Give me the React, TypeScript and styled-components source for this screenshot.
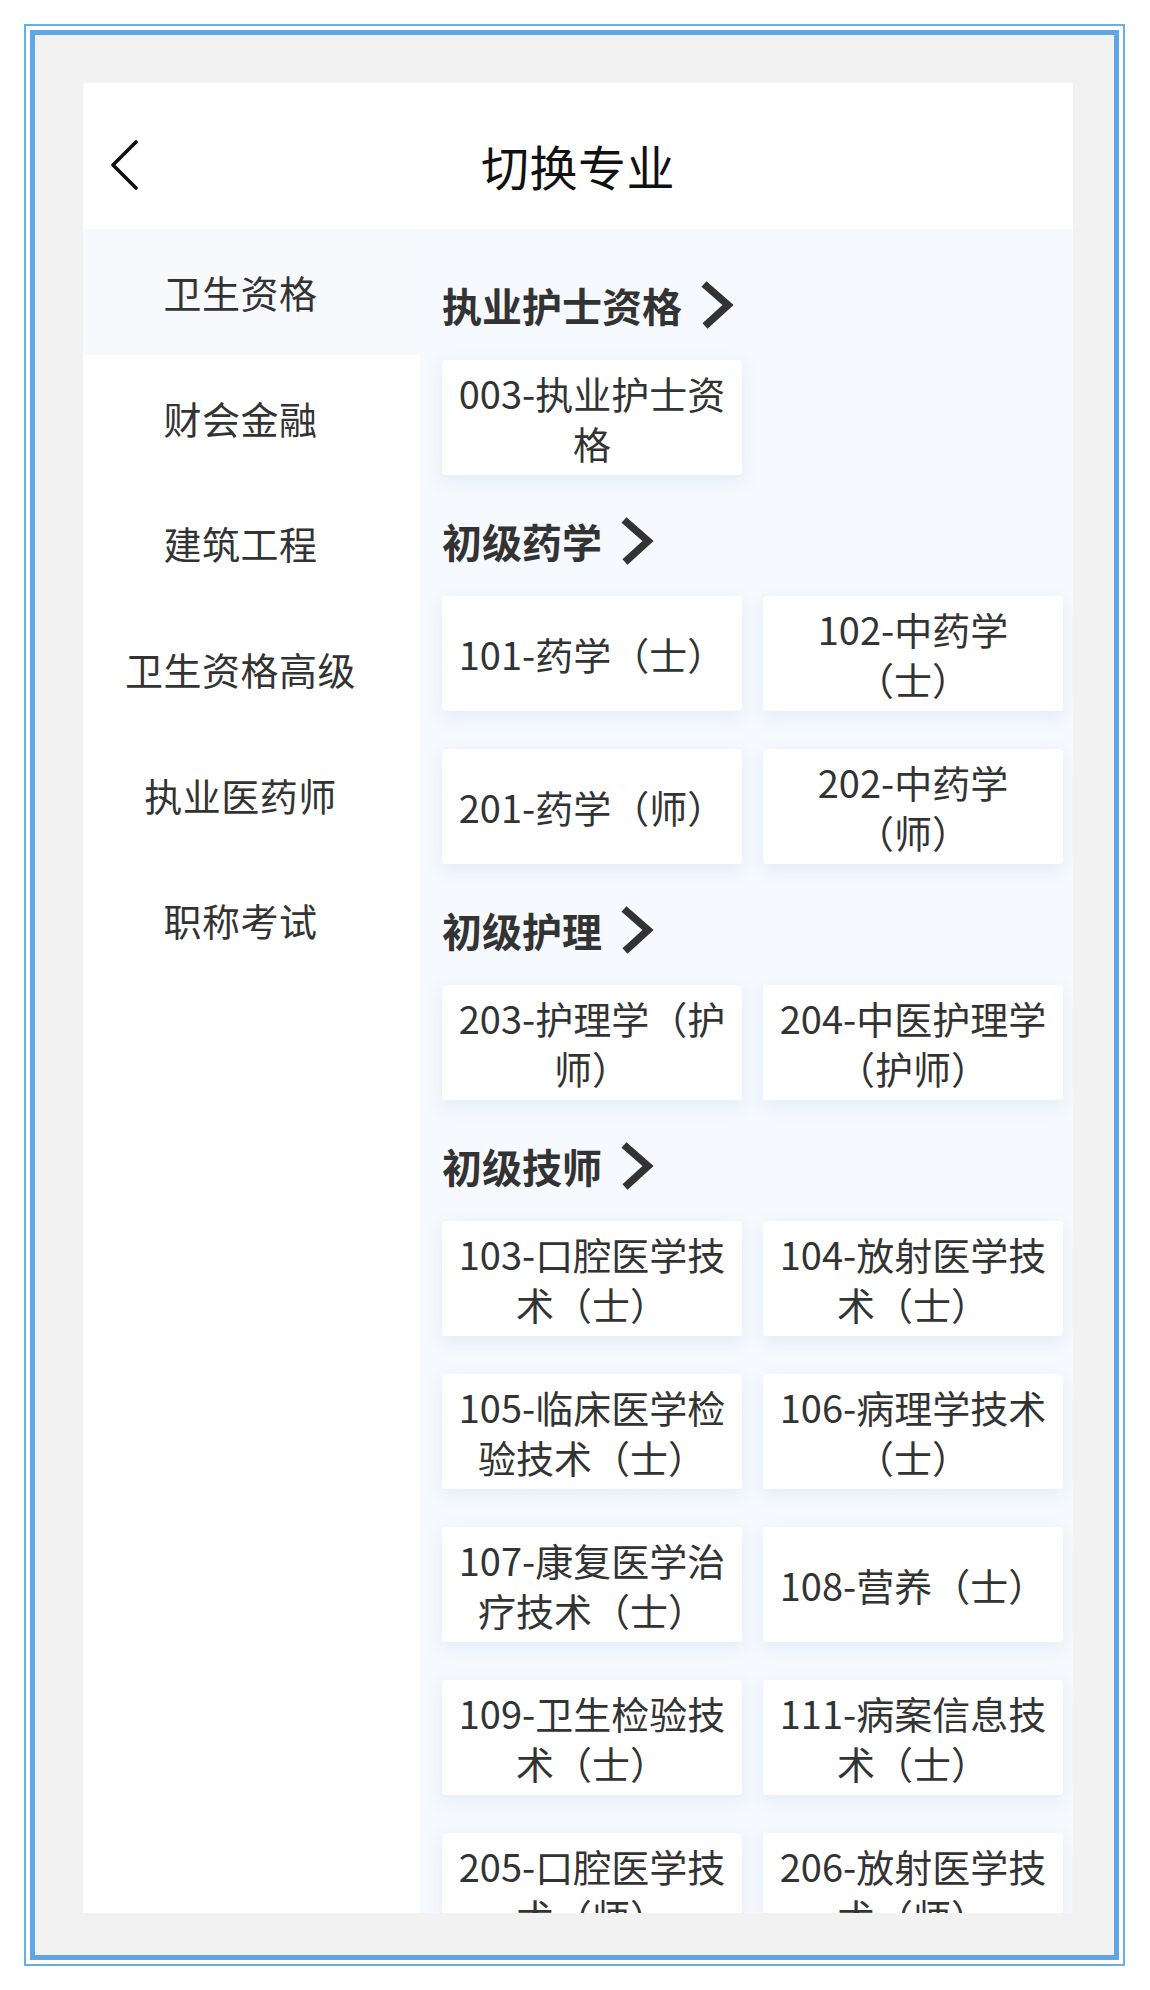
import React from 'react';
import styled, { createGlobalStyle } from 'styled-components';

const GlobalStyle = createGlobalStyle`
  html, body {
    margin: 0;
    padding: 0;
    background: #ffffff;
  }
  body {
    font-family: "Noto Sans CJK SC", "Noto Sans", sans-serif;
  }
  * {
    box-sizing: border-box;
  }
`;

const OuterFrame = styled.div`
  margin: 24px 0 0 24px;
  width: 1101px;
  height: 1942px;
  border: 2px solid #6aaee6;
  padding: 4px;
  background: #ffffff;
`;

const InnerFrame = styled.div`
  height: 100%;
  border: 5px solid #5ea7e4;
  background: #f2f2f2;
  padding: 48px 42px 42px 48px;
`;

const Phone = styled.div`
  width: 990px;
  height: 1830px;
  background: #ffffff;
  display: flex;
  flex-direction: column;
  overflow: hidden;
`;

const Header = styled.header`
  height: 146px;
  flex-shrink: 0;
  padding: 18px 0 0 0;
  display: grid;
  grid-template-columns: 1fr auto 1fr;
  align-items: center;
`;

const BackButton = styled.button`
  justify-self: start;
  margin-left: 26px;
  width: 34px;
  height: 54px;
  padding: 0;
  border: none;
  background: none;
  display: flex;
  align-items: center;
  justify-content: center;
  cursor: pointer;
`;

const Title = styled.h1`
  margin: 0;
  font-size: 48px;
  font-weight: 400;
  color: #111111;
  letter-spacing: 0.5px;
`;

const Body = styled.div`
  flex: 1;
  display: flex;
  min-height: 0;
`;

const Sidebar = styled.nav`
  width: 337px;
  flex-shrink: 0;
  background: #ffffff;
  display: flex;
  flex-direction: column;
`;

const SideItem = styled.div<{ active?: boolean }>`
  height: 125.6px;
  padding-right: 22px;
  display: flex;
  align-items: center;
  justify-content: center;
  font-size: 38px;
  letter-spacing: 0.5px;
  color: #333333;
  background: ${p => (p.active ? '#f7f9fc' : '#ffffff')};
`;

const Content = styled.main`
  flex: 1;
  background: #f6f9fd;
  padding: 10px 9px 0 22px;
  overflow: hidden;
`;

const Section = styled.section`
  padding-top: 11px;
`;

const SectionTitle = styled.div`
  height: 110px;
  display: flex;
  align-items: center;
  gap: 16px;
  font-size: 40px;
  font-weight: 700;
  color: #333333;
`;

const Grid = styled.div`
  display: grid;
  grid-template-columns: 300px 300px;
  column-gap: 21px;
  row-gap: 38px;
`;

const Card = styled.div`
  min-height: 115px;
  padding: 7px 10px;
  background: #ffffff;
  border-radius: 4px;
  box-shadow: 0 6px 16px rgba(205, 222, 245, 0.45);
  display: flex;
  align-items: center;
  justify-content: center;
  text-align: center;
  font-size: 38px;
  line-height: 50px;
  color: #333333;
`;

const BackIcon = () => (
  <svg width="30" height="54" viewBox="0 0 30 54">
    <polyline
      points="25,4 2,27 25,50"
      fill="none"
      stroke="#111111"
      strokeWidth="3.6"
      strokeLinecap="round"
      strokeLinejoin="round"
    />
  </svg>
);

const ChevronIcon = () => (
  <svg width="36" height="52" viewBox="0 0 36 52">
    <polyline
      points="6,5 30,26 7,47"
      fill="none"
      stroke="#333333"
      strokeWidth="7.5"
      strokeLinecap="butt"
      strokeLinejoin="miter"
    />
  </svg>
);

const categories = ['卫生资格', '财会金融', '建筑工程', '卫生资格高级', '执业医药师', '职称考试'];

const sections: { title: string; items: string[] }[] = [
  { title: '执业护士资格', items: ['003-执业护士资格'] },
  {
    title: '初级药学',
    items: ['101-药学（士）', '102-中药学（士）', '201-药学（师）', '202-中药学（师）'],
  },
  { title: '初级护理', items: ['203-护理学（护师）', '204-中医护理学（护师）'] },
  {
    title: '初级技师',
    items: [
      '103-口腔医学技术（士）',
      '104-放射医学技术（士）',
      '105-临床医学检验技术（士）',
      '106-病理学技术（士）',
      '107-康复医学治疗技术（士）',
      '108-营养（士）',
      '109-卫生检验技术（士）',
      '111-病案信息技术（士）',
      '205-口腔医学技术（师）',
      '206-放射医学技术（师）',
    ],
  },
];

export default function App() {
  return (
    <>
      <GlobalStyle />
      <OuterFrame>
        <InnerFrame>
          <Phone>
            <Header>
              <BackButton aria-label="返回">
                <BackIcon />
              </BackButton>
              <Title>切换专业</Title>
              <span />
            </Header>
            <Body>
              <Sidebar>
                {categories.map((c, i) => (
                  <SideItem key={c} active={i === 0}>
                    {c}
                  </SideItem>
                ))}
              </Sidebar>
              <Content>
                {sections.map(s => (
                  <Section key={s.title}>
                    <SectionTitle>
                      {s.title}
                      <ChevronIcon />
                    </SectionTitle>
                    <Grid>
                      {s.items.map(item => (
                        <Card key={item}>{item}</Card>
                      ))}
                    </Grid>
                  </Section>
                ))}
              </Content>
            </Body>
          </Phone>
        </InnerFrame>
      </OuterFrame>
    </>
  );
}
